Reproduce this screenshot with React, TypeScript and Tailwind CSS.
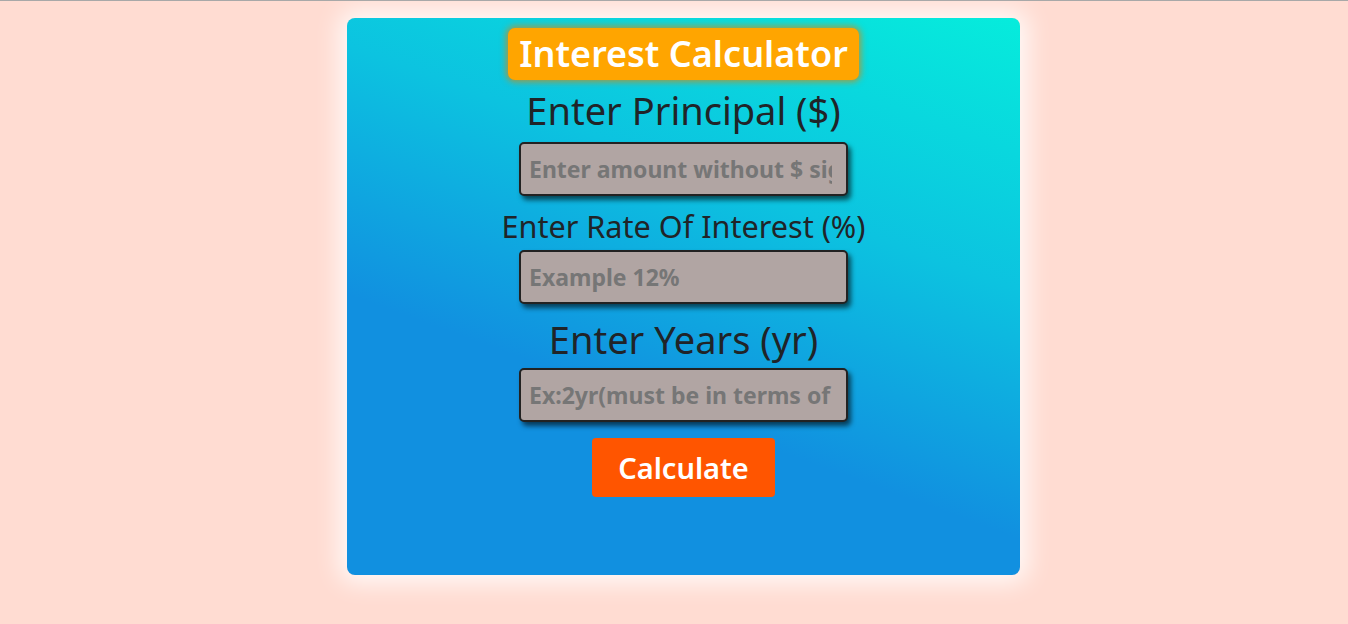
import React from "react";

export default function App() {
  const font = { fontFamily: '"Noto Sans", "Open Sans", sans-serif' };
  const inputCls =
    "h-[54px] w-[329px] rounded-[5px] border-2 border-[#222] bg-[#b1a5a3] pl-[8px] pr-[14px] text-[23px] font-bold placeholder:text-[#767676] shadow-[3px_4px_5px_rgba(0,0,0,0.6)] outline-none";
  return (
    <div className="min-h-[624px] w-full bg-[#ffdcd2] border-t border-[#a8a8a8] overflow-hidden" style={font}>
      <div className="ml-[347px] mt-[17px] w-[673px] h-[557px] rounded-[8px] bg-[linear-gradient(200deg,#06ecdc_0%,#0cc3e0_34%,#1190e0_65%,#1190e0_100%)] shadow-[0_0_25px_8px_rgba(255,255,255,0.85)] flex flex-col items-center">
        <div className="mt-[10px] h-[52px] w-[351px] rounded-[7px] bg-[#ffa500] shadow-[0_0_6px_2px_rgba(230,130,0,0.7)] flex items-center justify-center text-white font-semibold text-[36px] leading-none">
          Interest Calculator
        </div>
        <div className="mt-[7px] h-[46px] leading-[46px] text-[38px] text-[#202428]">Enter Principal ($)</div>
        <input className={"mt-[9px] " + inputCls} placeholder="Enter amount without $ sign" style={font} />
        <div className="mt-[11px] h-[38px] leading-[38px] text-[30.6px] text-[#202428]">Enter Rate Of Interest (%)</div>
        <input className={"mt-[5px] " + inputCls} placeholder="Example 12%" style={font} />
        <div className="mt-[12px] h-[46px] leading-[46px] text-[38px] text-[#202428]">Enter Years (yr)</div>
        <input className={"mt-[6px] " + inputCls} placeholder="Ex:2yr(must be in terms of year)" style={font} />
        <button
          className="mt-[16px] h-[59px] w-[183px] rounded-[4px] bg-[#ff5500] text-white font-semibold text-[29px] leading-none"
          style={font}
        >
          Calculate
        </button>
      </div>
    </div>
  );
}
